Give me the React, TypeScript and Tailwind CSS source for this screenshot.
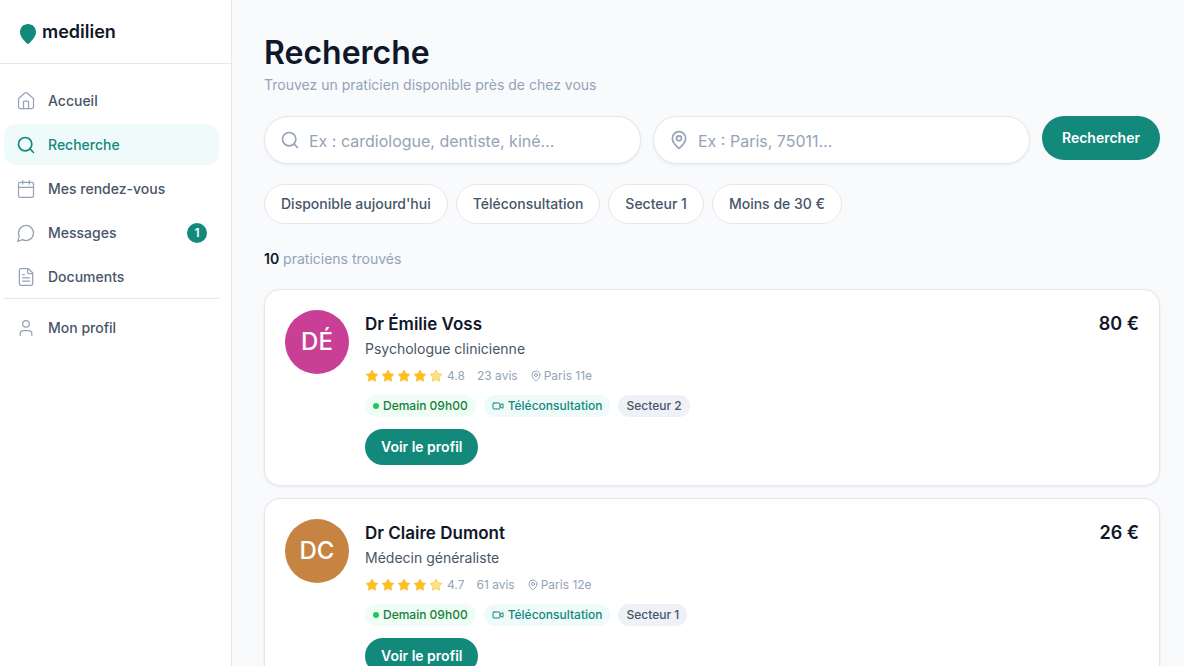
import { useState } from "react";
import { Calendar, FileText, House, MapPin, Search, Star, User, Video } from "lucide-react";
import type { ComponentType } from "react";
import clsx from "clsx";

interface IconProps {
  className?: string;
  strokeWidth?: number;
}

interface NavEntry {
  label: string;
  icon: ComponentType<IconProps>;
  active?: boolean;
  badge?: number;
}

interface Praticien {
  initiales: string;
  couleur: string;
  nom: string;
  specialite: string;
  note: string;
  avis: number;
  ville: string;
  dispo: string;
  secteur: string;
  prix: string;
}

function MessageIcon({ className, strokeWidth = 2 }: IconProps) {
  return (
    <svg
      viewBox="0 0 24 24"
      fill="none"
      stroke="currentColor"
      strokeWidth={strokeWidth}
      strokeLinecap="round"
      strokeLinejoin="round"
      className={className}
      aria-hidden="true"
    >
      <path d="M7.9 20A9 9 0 1 0 4 16.1L2 22Z" />
    </svg>
  );
}

function Logo() {
  return (
    <svg viewBox="0 0 16 20" className="w-4 h-5 text-[#12897b]" fill="currentColor" aria-hidden="true">
      <path d="M8 0C3.500 0 0 3.600 0 8c0 4.700 3.700 8.300 7.300 11.700a1 1 0 0 0 1.400 0C12.300 16.300 16 12.700 16 8c0-4.400-3.500-8-8-8Z" />
    </svg>
  );
}

const navigation: NavEntry[] = [
  { label: "Accueil", icon: House },
  { label: "Recherche", icon: Search, active: true },
  { label: "Mes rendez-vous", icon: Calendar },
  { label: "Messages", icon: MessageIcon, badge: 1 },
  { label: "Documents", icon: FileText },
];

const filtres = ["Disponible aujourd'hui", "Téléconsultation", "Secteur 1", "Moins de 30 €"];

const praticiens: Praticien[] = [
  {
    initiales: "DÉ",
    couleur: "bg-[#c93f96]",
    nom: "Dr Émilie Voss",
    specialite: "Psychologue clinicienne",
    note: "4.8",
    avis: 23,
    ville: "Paris 11e",
    dispo: "Demain 09h00",
    secteur: "Secteur 2",
    prix: "80 €",
  },
  {
    initiales: "DC",
    couleur: "bg-[#c78342]",
    nom: "Dr Claire Dumont",
    specialite: "Médecin généraliste",
    note: "4.7",
    avis: 61,
    ville: "Paris 12e",
    dispo: "Demain 09h00",
    secteur: "Secteur 1",
    prix: "26 €",
  },
];

function NavItem({ label, icon: Icon, active, badge }: NavEntry) {
  return (
    <a
      href="#"
      aria-current={active ? "page" : undefined}
      className={clsx(
        "flex items-center gap-3 h-[41px] px-3 rounded-xl text-sm font-medium",
        active ? "bg-[#effafa] text-[#12897b]" : "text-[#475569]"
      )}
    >
      <Icon className={clsx("size-5", !active && "text-[#94a3b8]")} strokeWidth={active ? 2 : 1.5} />
      <span className="flex-1">{label}</span>
      {badge && (
        <span className="flex items-center justify-center size-5 rounded-full bg-[#12897b] text-white text-xs font-semibold">
          {badge}
        </span>
      )}
    </a>
  );
}

function Sidebar() {
  return (
    <aside className="flex flex-col w-58 shrink-0 bg-white border-r border-gray-200">
      <div className="flex items-center gap-1.5 h-16 px-5 border-b border-gray-200">
        <div className="pt-1">
          <Logo />
        </div>
        <span className="text-lg font-semibold text-[#0f172a]">medilien</span>
      </div>
      <nav className="flex flex-col gap-[3px] pl-1 pr-3 pt-4 pb-px">
        {navigation.map((entry) => (
          <NavItem key={entry.label} {...entry} />
        ))}
      </nav>
      <div className="ml-1 mr-3 pt-2 border-t border-gray-200">
        <NavItem label="Mon profil" icon={User} />
      </div>
    </aside>
  );
}

function Etoiles() {
  return (
    <span className="flex gap-0.5" aria-hidden="true">
      {[1, 2, 3, 4, 5].map((n) => (
        <Star
          key={n}
          className={clsx("size-3.5 text-[#fbbf24]", n < 5 ? "fill-[#fbbf24]" : "fill-[#fde08a]")}
          strokeWidth={1}
        />
      ))}
    </span>
  );
}

function PraticienCard({ praticien: p }: { praticien: Praticien }) {
  return (
    <article className="flex gap-4 p-5 bg-white border border-gray-200 rounded-2xl shadow-[0_1px_3px_rgba(15,23,42,0.07)]">
      <div
        className={clsx(
          "flex items-center justify-center size-16 shrink-0 rounded-full text-white text-2xl font-medium",
          p.couleur
        )}
      >
        {p.initiales}
      </div>
      <div className="flex-1 min-w-0">
        <div className="flex justify-between leading-7 font-semibold text-[#0f172a]">
          <h2 className="text-[17px]">{p.nom}</h2>
          <span className="text-lg leading-7">{p.prix}</span>
        </div>
        <p className="text-sm leading-[22px] text-[#475569]">{p.specialite}</p>
        <div className="flex items-center gap-3 mt-1.5 text-xs leading-5 text-[#94a3b8]">
          <span className="flex items-center gap-1">
            <Etoiles />
            {p.note}
          </span>
          <span>{p.avis} avis</span>
          <span className="flex items-center gap-0.5">
            <MapPin className="size-3" strokeWidth={2} />
            {p.ville}
          </span>
        </div>
        <div className="flex flex-wrap gap-2 mt-[9px] text-xs font-medium">
          <span className="flex items-center gap-1 h-[22px] px-2 rounded-full bg-[#f0fdf4] text-[#15803d]">
            <span className="size-1.5 rounded-full bg-[#22c55e]" />
            {p.dispo}
          </span>
          <span className="flex items-center gap-1 h-[22px] px-2 rounded-full bg-[#effafa] text-[#12897b]">
            <Video className="size-3" strokeWidth={2} />
            Téléconsultation
          </span>
          <span className="flex items-center h-[22px] px-2 rounded-full bg-[#eef1f5] text-[#475569]">{p.secteur}</span>
        </div>
        <button type="button" className="h-9 px-4 mt-3 rounded-full bg-[#12897b] text-white text-sm font-semibold">
          Voir le profil
        </button>
      </div>
    </article>
  );
}

export default function App() {
  const [specialite, setSpecialite] = useState("");
  const [lieu, setLieu] = useState("");

  return (
    <div className="flex h-screen bg-[#f8fafc] font-['Inter',sans-serif]">
      <Sidebar />
      <main className="flex-1 min-w-0 pl-8 pr-6 py-8 overflow-y-auto [scrollbar-width:none]">
        <h1 className="text-[32px] leading-[42px] font-semibold text-[#0f172a]">Recherche</h1>
        <p className="text-sm leading-[22px] text-[#94a3b8]">Trouvez un praticien disponible près de chez vous</p>

        <form className="flex items-start gap-3 mt-5" onSubmit={(e) => e.preventDefault()}>
          <label className="flex flex-1 items-center gap-[9px] h-12 px-[15px] bg-white border border-gray-200 rounded-full shadow-[0_1px_3px_rgba(15,23,42,0.07)]">
            <Search className="size-5 shrink-0 text-[#94a3b8]" strokeWidth={2} />
            <input
              type="text"
              aria-label="Spécialité"
              placeholder="Ex : cardiologue, dentiste, kiné…"
              value={specialite}
              onChange={(e) => setSpecialite(e.target.value)}
              className="flex-1 min-w-0 pt-0.5 text-base outline-none placeholder:text-[#94a3b8]"
            />
          </label>
          <label className="flex flex-1 items-center gap-[9px] h-12 px-[15px] bg-white border border-gray-200 rounded-full shadow-[0_1px_3px_rgba(15,23,42,0.07)]">
            <MapPin className="size-5 shrink-0 text-[#94a3b8]" strokeWidth={2} />
            <input
              type="text"
              aria-label="Lieu"
              placeholder="Ex : Paris, 75011…"
              value={lieu}
              onChange={(e) => setLieu(e.target.value)}
              className="flex-1 min-w-0 pt-0.5 text-base outline-none placeholder:text-[#94a3b8]"
            />
          </label>
          <button type="submit" className="h-11 px-5 rounded-full bg-[#12897b] text-white text-sm font-semibold">
            Rechercher
          </button>
        </form>

        <div className="flex flex-wrap gap-2 mt-5">
          {filtres.map((filtre) => (
            <button
              key={filtre}
              type="button"
              className="h-10 px-4 bg-white border border-gray-200 rounded-full text-sm font-medium text-[#475569]"
            >
              {filtre}
            </button>
          ))}
        </div>

        <p className="mt-6 text-sm leading-[21px] text-[#94a3b8]">
          <strong className="font-semibold text-[#0f172a]">10</strong> praticiens trouvés
        </p>

        <div className="flex flex-col gap-3 mt-5">
          {praticiens.map((p) => (
            <PraticienCard key={p.nom} praticien={p} />
          ))}
        </div>
      </main>
    </div>
  );
}
